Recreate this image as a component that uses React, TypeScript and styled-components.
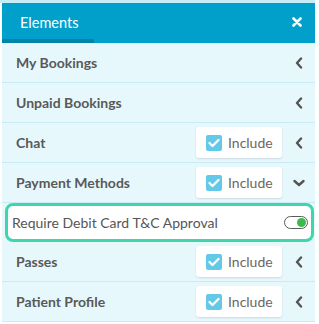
import React from "react";
import styled, { createGlobalStyle } from "styled-components";

const Global = createGlobalStyle`
  html, body { margin: 0; padding: 0; background: #ffffff; }
  body { font-family: Lato, "Open Sans", Arial, sans-serif; }
`;

const TopStrip = styled.div`
  height: 3px;
  width: 315px;
  background: #c6ecf8;
`;

const Panel = styled.div`
  margin-left: 2px;
  width: 313px;
  background: #e7f8fd;
`;

const Header = styled.div`
  height: 40px;
  background: #01a0cb;
  display: flex;
  align-items: stretch;
  justify-content: space-between;
`;

const Tab = styled.div`
  width: 92px;
  box-sizing: border-box;
  padding-left: 18px;
  display: flex;
  align-items: center;
  color: #ffffff;
  font-size: 14.5px;
  border-bottom: 4px solid #0083a9;
  padding-top: 2px;
`;

const Close = styled.div`
  width: 36px;
  display: flex;
  align-items: center;
  justify-content: center;
  padding-bottom: 2px;
`;

const Row = styled.div`
  height: 39px;
  border-bottom: 1px solid #c8ebf6;
  display: flex;
  align-items: center;
  padding-left: 14px;
`;

const Label = styled.div`
  flex: 1;
  font-weight: 700;
  font-size: 14px;
  color: #595959;
`;

const IncludeButton = styled.div`
  width: 86px;
  height: 31px;
  box-sizing: border-box;
  background: #ffffff;
  border-radius: 3px;
  box-shadow: 0 1px 2px rgba(0, 0, 0, 0.12);
  display: flex;
  align-items: center;
  padding-left: 10px;
  gap: 6px;
  font-size: 14px;
  color: #6b6663;
`;

const Check = styled.div`
  width: 16px;
  height: 16px;
  border-radius: 2px;
  background: #62c9e8;
  display: flex;
  align-items: center;
  justify-content: center;
`;

const Chevron = styled.div`
  width: 33px;
  display: flex;
  align-items: center;
  justify-content: center;
`;

const ToggleWrap = styled.div`
  height: 39px;
  padding: 0 1px 0 3px;
  display: flex;
  align-items: center;
`;

const ToggleBox = styled.div`
  flex: 1;
  height: 39px;
  box-sizing: border-box;
  border: 3px solid #40d6a9;
  border-radius: 8px;
  background: #ffffff;
  display: flex;
  align-items: center;
  padding-left: 4px;
  padding-right: 3px;
  font-size: 14px;
  color: #555555;
`;

const ToggleText = styled.div`
  flex: 1;
`;

const Switch = styled.div`
  width: 24px;
  height: 13px;
  box-sizing: border-box;
  border: 1.5px solid #5a5a5a;
  border-radius: 7px;
  display: flex;
  align-items: center;
  justify-content: flex-end;
  padding-right: 1px;
`;

const Knob = styled.div`
  width: 9px;
  height: 9px;
  border-radius: 50%;
  background: #3dba4e;
`;

const ChevronLeft = () => (
  <svg width="8" height="12" viewBox="0 0 8 12">
    <path d="M6 1.5 L2 6 L6 10.5" fill="none" stroke="#555" strokeWidth="2.4" strokeLinecap="round" strokeLinejoin="round" />
  </svg>
);

const ChevronDown = () => (
  <svg width="12" height="8" viewBox="0 0 12 8">
    <path d="M1.5 2 L6 6 L10.5 2" fill="none" stroke="#555" strokeWidth="2.4" strokeLinecap="round" strokeLinejoin="round" />
  </svg>
);

const Include = () => (
  <IncludeButton>
    <Check>
      <svg width="12" height="10" viewBox="0 0 12 10">
        <path d="M1.5 5 L4.5 8 L10.5 2" fill="none" stroke="#fff" strokeWidth="2.3" strokeLinecap="round" strokeLinejoin="round" />
      </svg>
    </Check>
    Include
  </IncludeButton>
);

type Item = { label: string; include?: boolean; open?: boolean };

const items: Item[] = [
  { label: "My Bookings" },
  { label: "Unpaid Bookings" },
  { label: "Chat", include: true },
  { label: "Payment Methods", include: true, open: true },
];

const after: Item[] = [
  { label: "Passes", include: true },
  { label: "Patient Profile", include: true },
];

const renderRow = (it: Item) => (
  <Row key={it.label}>
    <Label>{it.label}</Label>
    {it.include && <Include />}
    <Chevron>{it.open ? <ChevronDown /> : <ChevronLeft />}</Chevron>
  </Row>
);

export default function App() {
  return (
    <>
      <Global />
      <TopStrip />
      <Panel>
        <Header>
          <Tab>Elements</Tab>
          <Close>
            <svg width="10" height="10" viewBox="0 0 10 10">
              <path d="M1.5 1.5 L8.5 8.5 M8.5 1.5 L1.5 8.5" stroke="#fff" strokeWidth="2.6" strokeLinecap="round" />
            </svg>
          </Close>
        </Header>
        {items.map(renderRow)}
        <ToggleWrap>
          <ToggleBox>
            <ToggleText>Require Debit Card T&amp;C Approval</ToggleText>
            <Switch>
              <Knob />
            </Switch>
          </ToggleBox>
        </ToggleWrap>
        {after.map(renderRow)}
      </Panel>
    </>
  );
}
